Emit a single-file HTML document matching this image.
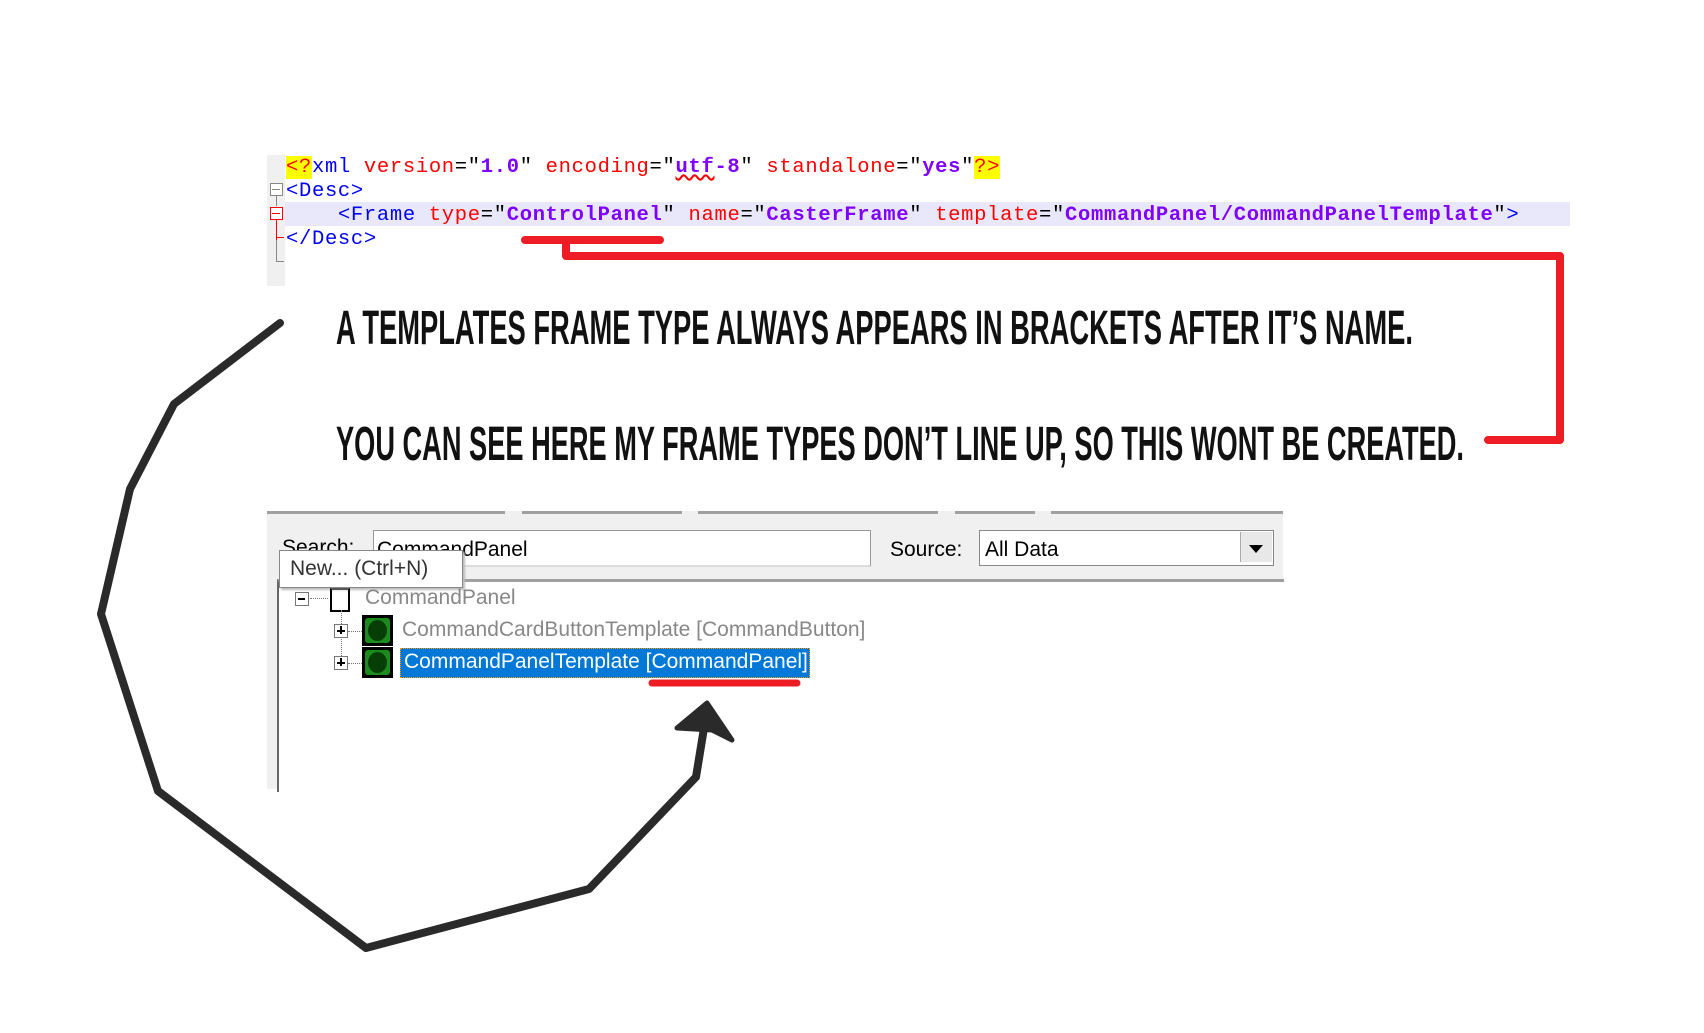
<!DOCTYPE html>
<html><head><meta charset="utf-8"><style>
body{margin:0;width:1704px;height:1033px;background:#fff;position:relative;overflow:hidden;font-family:"Liberation Sans",sans-serif}
.abs{position:absolute}
.code{font-family:"Liberation Mono","Courier New",monospace;font-size:20.5px;letter-spacing:0.68px;line-height:24px;white-space:pre;left:286px}
.t{color:#0000ff}.a{color:#ff0000}.v{color:#8000ff;font-weight:bold}.k{color:#000}
.y{background:#ffff00;color:#ff0000}
.ui{font-size:21px;color:#000}
</style></head><body>
<div class="abs" style="left:267px;top:155px;width:18px;height:131px;background:#f0f0f0"></div>
<div class="abs" style="left:285px;top:202px;width:1285px;height:24px;background:#e8e8fa"></div>
<div class="abs" style="left:270px;top:183px;width:11px;height:11px;border:1px solid #888;background:#fff"></div>
<div class="abs" style="left:272px;top:189px;width:8px;height:1px;background:#888"></div>
<div class="abs" style="left:276px;top:196px;width:1px;height:10px;background:#888"></div>
<div class="abs" style="left:270px;top:207px;width:11px;height:11px;border:1px solid #f00;background:#fff"></div>
<div class="abs" style="left:272px;top:213px;width:8px;height:1px;background:#f00"></div>
<div class="abs" style="left:276px;top:220px;width:1px;height:40px;background:#f00"></div>
<div class="abs" style="left:276px;top:237px;width:8px;height:1px;background:#f00"></div>
<div class="abs" style="left:276px;top:240px;width:1px;height:22px;background:#888"></div>
<div class="abs" style="left:276px;top:261px;width:8px;height:1px;background:#888"></div>
<div class="abs code" style="top:156px"><span class="y">&lt;?</span><span class="t">xml</span> <span class="a">version</span><span class="k">="</span><span class="v">1.0</span><span class="k">"</span> <span class="a">encoding</span><span class="k">="</span><span class="v" style="text-decoration:underline wavy #f00">utf</span><span class="v">-8</span><span class="k">"</span> <span class="a">standalone</span><span class="k">="</span><span class="v">yes</span><span class="k">"</span><span class="y">?&gt;</span>
<span class="t">&lt;Desc&gt;</span>
    <span class="t">&lt;Frame</span> <span class="a">type</span><span class="k">="</span><span class="v">ControlPanel</span><span class="k">"</span> <span class="a">name</span><span class="k">="</span><span class="v">CasterFrame</span><span class="k">"</span> <span class="a">template</span><span class="k">="</span><span class="v">CommandPanel/CommandPanelTemplate</span><span class="k">"</span><span class="t">&gt;</span>
<span class="t">&lt;/Desc&gt;</span></div>

<div class="abs" style="left:267px;top:511px;width:1016px;height:278px;background:#f0f0f0"></div>
<div class="abs" style="left:267px;top:511px;width:238px;height:3px;background:#a0a0a0"></div>
<div class="abs" style="left:522px;top:511px;width:160px;height:3px;background:#a0a0a0"></div>
<div class="abs" style="left:698px;top:511px;width:240px;height:3px;background:#a0a0a0"></div>
<div class="abs" style="left:955px;top:511px;width:80px;height:3px;background:#a0a0a0"></div>
<div class="abs" style="left:1051px;top:511px;width:232px;height:3px;background:#a0a0a0"></div>
<div class="abs" style="left:277px;top:579px;width:1005px;height:210px;background:#fff;border-left:2px solid #666;border-top:3px solid #a0a0a0"></div>
<div class="abs ui" style="left:282px;top:536px">Search:</div>
<div class="abs" style="left:373px;top:530px;width:496px;height:34px;background:#fff;border:1px solid #999;border-bottom:2px solid #ddd"></div>
<div class="abs ui" style="left:377px;top:538px">CommandPanel</div>
<div class="abs ui" style="left:890px;top:538px">Source:</div>
<div class="abs" style="left:979px;top:530px;width:293px;height:34px;background:#fff;border:1px solid #888"></div>
<div class="abs ui" style="left:985px;top:538px">All Data</div>
<div class="abs" style="left:1240px;top:532px;width:31px;height:30px;background:#e8e8e8;border-left:1px solid #aaa"></div>
<div class="abs" style="left:1249px;top:545px;width:0;height:0;border-left:7px solid transparent;border-right:7px solid transparent;border-top:8px solid #000"></div>
<div class="abs" style="left:279px;top:550px;width:182px;height:36px;background:#fff;border:1px solid #888;box-shadow:2px 2px 2px #bbb"></div>
<div class="abs ui" style="left:290px;top:557px;color:#333">New... (Ctrl+N)</div>
<div class="abs" style="left:295px;top:592px;width:12px;height:12px;border:1px solid #777;background:#fff"></div>
<div class="abs" style="left:298px;top:598px;width:7px;height:2px;background:#000"></div>
<div class="abs" style="left:310px;top:598px;width:18px;border-top:1px dotted #777"></div>
<div class="abs" style="left:330px;top:588px;width:16px;height:20px;border:2px solid #000;border-top-color:#555"></div>
<div class="abs ui" style="left:365px;top:586px;color:#888">CommandPanel</div>
<div class="abs" style="left:341px;top:610px;height:56px;border-left:1px dotted #777"></div>
<div class="abs" style="left:334px;top:624px;width:12px;height:12px;border:1px solid #777;background:#fff"></div>
<div class="abs" style="left:337px;top:630px;width:8px;height:2px;background:#000"></div>
<div class="abs" style="left:340px;top:626px;width:2px;height:8px;background:#000"></div>
<div class="abs" style="left:348px;top:631px;width:14px;border-top:1px dotted #777"></div>
<div class="abs" style="left:362px;top:615px;width:31px;height:31px;background:#000"></div>
<div class="abs" style="left:365px;top:618px;width:25px;height:25px;background:#1b8c1b;border-radius:3px"></div>
<div class="abs" style="left:368px;top:620px;width:19px;height:21px;background:#063e06;border-radius:50%"></div>
<div class="abs ui" style="left:402px;top:618px;color:#888">CommandCardButtonTemplate [CommandButton]</div>
<div class="abs" style="left:334px;top:656px;width:12px;height:12px;border:1px solid #777;background:#fff"></div>
<div class="abs" style="left:337px;top:662px;width:8px;height:2px;background:#000"></div>
<div class="abs" style="left:340px;top:658px;width:2px;height:8px;background:#000"></div>
<div class="abs" style="left:348px;top:663px;width:14px;border-top:1px dotted #777"></div>
<div class="abs" style="left:362px;top:647px;width:31px;height:31px;background:#000"></div>
<div class="abs" style="left:365px;top:650px;width:25px;height:25px;background:#1b8c1b;border-radius:3px"></div>
<div class="abs" style="left:368px;top:652px;width:19px;height:21px;background:#063e06;border-radius:50%"></div>
<div class="abs" style="left:400px;top:648px;width:408px;height:28px;background:#0078d7;border:1px dotted #f90"></div>
<div class="abs ui" style="left:404px;top:650px;color:#fff">CommandPanelTemplate [CommandPanel]</div>

<svg class="abs" style="left:0;top:0" width="1704" height="1033">
<g fill="none" stroke="#ee1c25" stroke-width="8" stroke-linecap="round" stroke-linejoin="round">
<path d="M525 240 H660"/>
<path d="M566 240 V256 H1560 V440 H1488"/>
<path d="M652 683 H797" stroke-width="7"/>
</g>
<g fill="none" stroke="#2a2a2a" stroke-width="8" stroke-linejoin="round" stroke-linecap="round">
<path d="M280 323 L174 404 L130 489 L101 614 L158 791 L366 948 L589 889 L696 777 L704 728"/>
</g>
<path d="M677 728 L707 703 L732 740 L712 730 Z" fill="#2a2a2a" stroke="#2a2a2a" stroke-width="5" stroke-linejoin="round"/>
<g font-family="Liberation Sans Narrow, Liberation Sans, sans-serif" font-weight="bold" font-size="48" fill="#111">
<text x="336" y="344" textLength="1077" lengthAdjust="spacingAndGlyphs">A TEMPLATES FRAME TYPE ALWAYS APPEARS IN BRACKETS AFTER IT’S NAME.</text>
<text x="336" y="460" textLength="1128" lengthAdjust="spacingAndGlyphs">YOU CAN SEE HERE MY FRAME TYPES DON’T LINE UP, SO THIS WONT BE CREATED.</text>
</g>
</svg>
</body></html>
